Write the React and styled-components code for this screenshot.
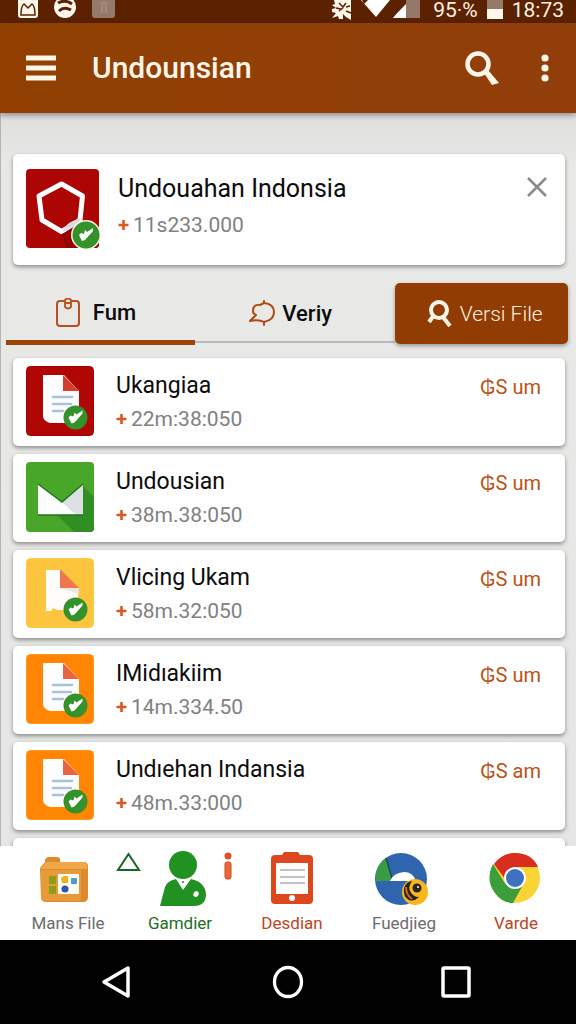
import React from "react";
import styled, { createGlobalStyle } from "styled-components";

const Global = createGlobalStyle`
  *, *::before, *::after { box-sizing: border-box; }
  body { margin: 0; background: #e6e6e5; font-family: Roboto, "Liberation Sans", sans-serif; }
  button { font: inherit; color: inherit; border: 0; padding: 0; background: none; cursor: pointer; }
  svg { display: block; flex: none; }
  h1, h2, p { margin: 0; padding: 0; }
`;

const Screen = styled.div`
  height: 100vh;
  display: flex;
  flex-direction: column;
  overflow: hidden;
`;

const StatusBar = styled.div`
  flex: none;
  height: 23px;
  padding: 0 12px 0 18px;
  display: flex;
  justify-content: space-between;
  background: #5c2200;
  color: #fff1e4;
`;

const StatusGroup = styled.div`
  display: flex;
  align-items: flex-start;
  gap: ${(p) => p.$gap}px;
`;

const StatusText = styled.span`
  font-size: 21px;
  line-height: 20px;
`;

const AppBar = styled.header`
  flex: none;
  height: 90px;
  padding: 0 20px;
  display: flex;
  align-items: center;
  background: linear-gradient(90deg, #914002, #913e0b);
  color: #fff6ea;
  box-shadow: 0 2px 6px rgba(0, 0, 0, 0.4);
  z-index: 1;
`;

const AppTitle = styled.h1`
  flex: 1;
  padding-left: 30px;
  font-size: 30px;
  line-height: 36px;
  font-weight: 500;
`;

const IconButton = styled.button`
  display: flex;
  align-items: center;
  justify-content: center;
  width: ${(p) => p.$width}px;
  height: 42px;
`;

const AppActions = styled.div`
  display: flex;
  gap: 29px;
`;

const Content = styled.main`
  flex: 1;
  min-height: 0;
  overflow: hidden;
  padding: 41px 11px 0 12px;
  background: linear-gradient(#dfdfde, #e9e9e7 60px, #e6e6e6);
  border-left: 1px solid #b4b4b4;
`;

const Card = styled.article`
  display: flex;
  height: ${(p) => (p.$large ? 111 : 88)}px;
  padding: ${(p) => (p.$large ? "15px 16px 0 13px" : "8px 24px 0 13px")};
  gap: ${(p) => (p.$large ? 16 : 21)}px;
  border-radius: 5px;
  background: #fefefe;
  box-shadow: 0 2px 4px rgba(0, 0, 0, 0.4);
`;

const CardText = styled.div`
  flex: 1;
  min-width: 0;
  padding-top: ${(p) => (p.$large ? 4 : 3)}px;
`;

const CardTitle = styled.h2`
  font-size: ${(p) => (p.$large ? 25 : 23)}px;
  line-height: ${(p) => (p.$large ? 32 : 34)}px;
  font-weight: 400;
  color: #0c0c0c;
  white-space: nowrap;
`;

const CardMeta = styled.p`
  display: flex;
  align-items: center;
  gap: 4px;
  font-size: 21px;
  line-height: ${(p) => (p.$large ? 40 : 32)}px;
  color: #818181;
`;

const CloseButton = styled.button`
  align-self: flex-start;
  width: 24px;
  height: 36px;
  display: flex;
  align-items: center;
  justify-content: center;
`;

const Price = styled.span`
  padding-top: 6px;
  font-size: 20px;
  line-height: 30px;
  color: #bd5213;
  white-space: nowrap;
`;

const Tabs = styled.div`
  display: flex;
  align-items: flex-start;
  height: 63px;
  margin: 18px -3px 12px -7px;
`;

const Tab = styled.button`
  flex: ${(p) => p.$grow};
  display: flex;
  align-items: center;
  justify-content: center;
  gap: ${(p) => p.$gap}px;
  height: ${(p) => (p.$selected ? 62 : 60)}px;
  padding: 2px 9px 0 0;
  border-bottom: ${(p) => (p.$selected ? "5px solid #9b4305" : "2px solid #bababa")};
  font-size: 22px;
  font-weight: 500;
  color: #0c0c0c;
`;

const FileTab = styled.button`
  flex: 174;
  height: 61px;
  padding-left: 6px;
  display: flex;
  align-items: center;
  justify-content: center;
  gap: 7px;
  border-radius: 5px;
  background: #903c02;
  color: #fff1e2;
  font-size: 21px;
  font-weight: 300;
  box-shadow: 0 2px 4px rgba(0, 0, 0, 0.35);
`;

const List = styled.div`
  display: grid;
  gap: 8px;
`;

const BottomNav = styled.nav`
  flex: none;
  display: grid;
  grid-template-columns: repeat(5, 1fr);
  height: 94px;
  padding: 0 4px 0 12px;
  background: #fefefe;
`;

const NavItem = styled.button`
  position: relative;
  display: flex;
  flex-direction: column;
  align-items: center;
  padding-top: 4px;
  font-size: 17px;
  line-height: 24px;
  white-space: nowrap;
  color: ${(p) => p.$color};
`;

const NavLabel = styled.span`
  margin-top: 1px;
`;

const NavBadge = styled.span`
  position: absolute;
  top: 6px;
  right: ${(p) => p.$right}px;
`;

const SystemNav = styled.div`
  flex: none;
  height: 84px;
  padding: 0 36px;
  display: grid;
  grid-template-columns: repeat(3, 1fr);
  justify-items: center;
  align-items: center;
  background: #010101;
`;

const Plus = () => (
  <svg width="11" height="12" viewBox="0 0 11 12" aria-hidden="true">
    <path d="M5.500 1v10M.5 6h10" stroke="#d9581d" strokeWidth="2.600" />
  </svg>
);

const Check = ({ x, y, r }) => (
  <g transform={`translate(${x} ${y})`}>
    <circle r={r} fill="#35922a" />
    <path d="M-7 0l2-2 3 1 1-4 2 2 6-4v3l-8 9-3 1z" fill="#fff" />
  </g>
);

const HexIcon = () => (
  <svg width="76" height="82" viewBox="0 0 76 82" aria-hidden="true">
    <rect width="73" height="79" rx="4" fill="#ad0503" />
    <path d="M36 65L53 50 73 60v15q0 4-4 4H40z" fill="#940200" />
    <path d="M35.500 15L56.500 27 54 51 35.500 62.500 16 51 13 27z" fill="#ad0503" stroke="#fff" strokeWidth="5" strokeLinejoin="round" />
    <path d="M37 63q2-8 10-11l8-3-2 5z" fill="#d9dbe4" />
    <circle cx="60" cy="66" r="15" fill="#fff4ea" />
    <Check x={60} y={66} r={13.5} />
  </svg>
);

const DocIcon = ({ bg, edge, fold, plain }) => (
  <svg width="69" height="70" viewBox="0 0 69 70" aria-hidden="true">
    <rect x=".5" y=".5" width="67" height="69" rx="4" fill={bg} stroke={edge} />
    {plain ? (
      <path d="M20 12h14l18 18v22H31l-4-2-2 3h-5z" fill="#fffdf9" />
    ) : (
      <path d="M17 9h21l15 16v32H24q-6-2-7-6z" fill="#fdfdfe" />
    )}
    {plain ? (
      <path d="M34 11l19 19H34z" fill={fold} />
    ) : (
      <path d="M37 9l16 16H37z" fill={fold} />
    )}
    {plain ? (
      <path d="M34 30h19v6z" fill="#e9e5e4" />
    ) : (
      <path d="M27 31h19M27 38h18M27 45h10" stroke="#a9c2de" strokeWidth="2.600" strokeLinecap="round" />
    )}
    <Check x={49.5} y={51.5} r={12} />
  </svg>
);

const MailIcon = () => (
  <svg width="69" height="70" viewBox="0 0 69 70" aria-hidden="true">
    <rect width="68" height="70" rx="4" fill="#48a729" />
    <path d="M57 24l11 11v31q0 4-4 4H48L31 53z" fill="#2f8f22" />
    <path d="M12 22l24 18 21-18v31H12z" fill="#fcfdfd" />
    <path d="M36 40l21-17v30H50z" fill="#dde1e6" />
    <path d="M12 22l24 18 21-18M12 53h45" fill="none" stroke="#26751b" strokeWidth="1.500" />
  </svg>
);

const RedDoc = () => <DocIcon bg="#b00704" edge="#9e0402" fold="#d83c2c" />;
const YellowDoc = () => <DocIcon bg="#fdc53e" edge="#fcc94e" fold="#ee774c" plain />;
const OrangeDoc = () => <DocIcon bg="#ff8502" edge="#fa9828" fold="#ea6340" />;

const rows = [
  { title: "Ukangiaa", meta: "22m:38:050", unit: "um", Icon: RedDoc },
  { title: "Undousian", meta: "38m.38:050", unit: "um", Icon: MailIcon },
  { title: "Vlicing Ukam", meta: "58m.32:050", unit: "um", Icon: YellowDoc },
  { title: "IMidıakiim", meta: "14m.334.50", unit: "um", Icon: OrangeDoc },
  { title: "Undıehan Indansia", meta: "48m.33:000", unit: "am", Icon: OrangeDoc },
];

const FolderIcon = () => (
  <svg width="60" height="60" viewBox="0 0 60 60" aria-hidden="true">
    <path d="M2 18l5-6V10q1-3 4-3h8q3 0 3 3v2h23q5 0 5 4v31q0 5-5 5H8q-5 0-5-5z" fill="#dc8a2c" />
    <path d="M2 19l6-7h38q4 1 3 7z" fill="#f0a749" />
    <path d="M3 20h40v27q0 4-4 4H8q-5 0-5-4z" fill="#e69a39" />
    <path d="M20 24h21v20H20z" fill="#fdfbf5" />
    <path d="M11 26h7v8h-7zM11 36h7v8h-7z" fill="#8c9e18" />
    <path d="M23 28l3-2h4v7h-6z" fill="#eeb31c" />
    <rect x="33" y="28" width="6" height="6" rx="1" fill="#4b9dca" />
    <circle cx="27" cy="39" r="3.500" fill="#2e58a7" />
  </svg>
);

const PersonIcon = () => (
  <svg width="52" height="60" viewBox="-4 0 52 60" aria-hidden="true">
    <circle cx="25" cy="15" r="14" fill="#219121" />
    <path d="M2 56L7 37q2-6 11-8l7 11 8-11q14 3 15 15 0 12-12 12z" fill="#219121" />
    <circle cx="25" cy="32" r="1" fill="#219121" />
    <ellipse cx="38" cy="44" rx="2.500" ry="3" fill="#fff" transform="rotate(30 38 44)" />
  </svg>
);

const ClipboardIcon = () => (
  <svg width="46" height="60" viewBox="0 0 46 60" aria-hidden="true">
    <path d="M8 5h5l2-3h14l2 3h9q4 0 4 4v41q0 4-4 4H6q-4 0-4-4V9q0-4 4-4z" fill="#dc471e" />
    <path d="M7 13h32v31H7z" fill="#fdfdfd" />
    <path d="M11 20h25M11 27h25M11 33h25" stroke="#c2c2c2" strokeWidth="2" />
    <circle cx="23" cy="48" r="3" fill="#fff" />
  </svg>
);

const GlobeIcon = () => (
  <svg width="58" height="60" viewBox="0 0 58 60" aria-hidden="true">
    <circle cx="26" cy="29" r="26" fill="#2f65ae" />
    <path d="M11 8L17 31H1Q-1 17 11 8z" fill="#3b9a44" />
    <path d="M11 8l6 20" stroke="#174c59" strokeWidth="1.500" />
    <path d="M15 31q3-8 14-9 9 0 12 9z" fill="#fff" />
    <circle cx="40" cy="42" r="13" fill="#f9b51d" />
    <path d="M29 38q2-6 8-7-4 6-2 10 3 6 9 6-5 5-10 3-6-3-5-12z" fill="#27221d" />
    <path d="M31 37q0 8 6 12" fill="none" stroke="#c76a1c" strokeWidth="2" />
    <circle cx="42" cy="38" r="4.500" fill="#2d261c" />
    <circle cx="43" cy="37" r="1" fill="#fff" />
  </svg>
);

const BrowserIcon = () => (
  <svg width="54" height="60" viewBox="0 0 54 60" aria-hidden="true">
    <circle cx="26" cy="28" r="25" fill="#fad334" />
    <path d="M5 14Q13 3 26 3q17 0 23 14H26q-9 1-10 12z" fill="#d72e1f" />
    <path d="M4 14q-8 16 2 29 7 10 18 10l11-20q-13 9-20-1z" fill="#3b9e3a" />
    <circle cx="26" cy="28" r="11" fill="#fff" />
    <circle cx="26" cy="28" r="9" fill="#3e72c1" />
  </svg>
);

const TriangleMark = () => (
  <svg width="25" height="20" viewBox="0 0 25 20" aria-hidden="true">
    <path d="M12.500 2L23 18H2z" fill="none" stroke="#146729" strokeWidth="2" />
  </svg>
);

const InfoMark = () => (
  <svg width="8" height="29" viewBox="0 0 8 29" aria-hidden="true">
    <circle cx="4" cy="4" r="3.500" fill="#df5024" />
    <rect x="1" y="10" width="6" height="17" rx="2" fill="#e8683e" stroke="#cf4a1c" />
  </svg>
);

const navItems = [
  { label: "Mans File", color: "#6c6c6c", Icon: FolderIcon, Badge: TriangleMark, right: -17 },
  { label: "Gamdier", color: "#1c6e24", Icon: PersonIcon, Badge: InfoMark, right: 4 },
  { label: "Desdian", color: "#bd451c", Icon: ClipboardIcon },
  { label: "Fuedjieg", color: "#6c6c6c", Icon: GlobeIcon },
  { label: "Varde", color: "#bd451c", Icon: BrowserIcon },
];

export default function App() {
  return (
    <Screen>
      <Global />
      <StatusBar>
        <StatusGroup $gap={16}>
          <svg width="20" height="23" viewBox="0 0 20 23" aria-hidden="true">
            <path d="M0 0h20v15q0 3-3 3H3q-3 0-3-3z" fill="#fff6ec" />
            <path d="M3 15q0-9 3-11l4 4 4-4q3 2 3 11z" fill="none" stroke="#5c2200" strokeWidth="1.500" />
          </svg>
          <svg width="22" height="23" viewBox="0 0 22 23" aria-hidden="true">
            <circle cx="11" cy="7" r="11" fill="#fff6ec" />
            <path d="M4 3q7-4 14 1M5 11q5-5 12-1" fill="none" stroke="#5c2200" strokeWidth="3" />
          </svg>
          <svg width="23" height="23" viewBox="0 0 23 23" aria-hidden="true">
            <path d="M0 0h23v15q0 3-3 3H3q-3 0-3-3z" fill="#95796a" />
            <path d="M9 3h6M10 4v9M14 4v9" stroke="#b59b8b" />
          </svg>
        </StatusGroup>
        <StatusGroup $gap={9}>
          <StatusGroup $gap={12}>
            <svg width="90" height="23" viewBox="0 0 90 23" aria-hidden="true">
              <path d="M3 0h17v20l-5-3-3-3v5H8l-1-3-6 2 4-5-4-1V9l4-1-4-3 3-1z" fill="#fff6ec" />
              <path d="M8 3l4 4 3-4M8 11l4-3M15 7l4-1M15 11l5 2M5 8l5 1" fill="none" stroke="#5c2200" strokeWidth="1.500" />
              <path d="M30 0h29L45 17z" fill="#fff" />
              <path d="M31 0l2 4 4-4z" fill="#5c2200" />
              <path d="M75 0h14v18H62z" fill="#96786a" />
              <path d="M75 3v15H62z" fill="#fff" />
              <path d="M62 0h13v4L62 17z" fill="#5c2200" />
            </svg>
            <StatusText>95·%</StatusText>
          </StatusGroup>
          <svg width="16" height="23" viewBox="0 0 16 23" aria-hidden="true">
            <path d="M0 0h16v9H0z" fill="#95796a" />
            <path d="M0 9h16v10H0z" fill="#fff6ec" />
          </svg>
          <StatusText>18:73</StatusText>
        </StatusGroup>
      </StatusBar>

      <AppBar>
        <IconButton $width={42} aria-label="Menu">
          <svg width="30" height="26" viewBox="0 0 30 26">
            <path d="M0 3h30M0 13h30M0 23h30" stroke="#fff6ea" strokeWidth="5" />
          </svg>
        </IconButton>
        <AppTitle>Undounsian</AppTitle>
        <AppActions>
          <IconButton $width={46} aria-label="Search">
            <svg width="36" height="36" viewBox="0 0 36 36">
              <circle cx="14" cy="14" r="10.500" fill="none" stroke="#fff6ea" strokeWidth="4.500" />
              <path d="M20 23l8 12 7-2-11-13z" fill="#fff6ea" />
            </svg>
          </IconButton>
          <IconButton $width={22} aria-label="More options">
            <svg width="8" height="28" viewBox="0 0 8 28">
              <circle cx="4" cy="4" r="3.600" fill="#fff6ea" />
              <circle cx="4" cy="14" r="3.600" fill="#fff6ea" />
              <circle cx="4" cy="24" r="3.600" fill="#fff6ea" />
            </svg>
          </IconButton>
        </AppActions>
      </AppBar>

      <Content>
        <Card $large>
          <HexIcon />
          <CardText $large>
            <CardTitle $large>Undouahan Indonsia</CardTitle>
            <CardMeta $large><Plus />11s233.000</CardMeta>
          </CardText>
          <CloseButton aria-label="Close">
            <svg width="22" height="22" viewBox="0 0 22 22">
              <path d="M2 2l18 18M20 2L2 20" stroke="#8b8b8b" strokeWidth="2.600" />
            </svg>
          </CloseButton>
        </Card>

        <Tabs>
          <Tab $grow={188} $gap={13} $selected>
            <svg width="24" height="29" viewBox="0 0 24 29" aria-hidden="true">
              <rect x="1" y="3" width="22" height="25" rx="3" fill="none" stroke="#b8501f" strokeWidth="2" />
              <path d="M9 2q3-3 6 0v7q-3 3-6 0zM9 5h6" fill="#e6e6e3" stroke="#b8501f" strokeWidth="1.800" />
            </svg>
            Fum
          </Tab>
          <Tab $grow={200} $gap={7}>
            <svg width="26" height="27" viewBox="0 0 26 27" aria-hidden="true">
              <path d="M11 5Q4 4 4 11q0 3 3 4l-6 6q9-2 14 1 10-2 10-10 0-8-10-9V1M15 22v3M11 5l4-2" fill="none" stroke="#b04a12" strokeWidth="2" strokeLinecap="round" strokeLinejoin="round" />
            </svg>
            Veriy
          </Tab>
          <FileTab>
            <svg width="26" height="28" viewBox="0 0 26 28" aria-hidden="true">
              <circle cx="12" cy="10" r="8" fill="none" stroke="#fff6ea" strokeWidth="4" />
              <path d="M7 15l-5 7M16 17l7 9" stroke="#fff6ea" strokeWidth="4" />
            </svg>
            Versi File
          </FileTab>
        </Tabs>

        <List>
          {rows.map(({ title, meta, unit, Icon }) => (
            <Card key={title}>
              <Icon />
              <CardText>
                <CardTitle>{title}</CardTitle>
                <CardMeta><Plus />{meta}</CardMeta>
              </CardText>
              <Price>₲S {unit}</Price>
            </Card>
          ))}
          <Card />
        </List>
      </Content>

      <BottomNav>
        {navItems.map(({ label, color, Icon, Badge, right }) => (
          <NavItem key={label} $color={color}>
            <Icon />
            <NavLabel>{label}</NavLabel>
            {Badge && <NavBadge $right={right}><Badge /></NavBadge>}
          </NavItem>
        ))}
      </BottomNav>

      <SystemNav>
        <IconButton $width={48} aria-label="Back">
          <svg width="38" height="34" viewBox="0 0 38 34">
            <path d="M27 3v28L3 17z" fill="none" stroke="#fff" strokeWidth="3.500" strokeLinejoin="round" />
          </svg>
        </IconButton>
        <IconButton $width={48} aria-label="Home">
          <svg width="32" height="34" viewBox="0 0 32 34">
            <ellipse cx="16" cy="17" rx="13.500" ry="14.500" fill="none" stroke="#fff" strokeWidth="3.300" />
          </svg>
        </IconButton>
        <IconButton $width={48} aria-label="Recent apps">
          <svg width="30" height="32" viewBox="0 0 30 32">
            <rect x="2" y="2" width="26" height="28" rx="1" fill="none" stroke="#fff" strokeWidth="3.500" />
          </svg>
        </IconButton>
      </SystemNav>
    </Screen>
  );
}
